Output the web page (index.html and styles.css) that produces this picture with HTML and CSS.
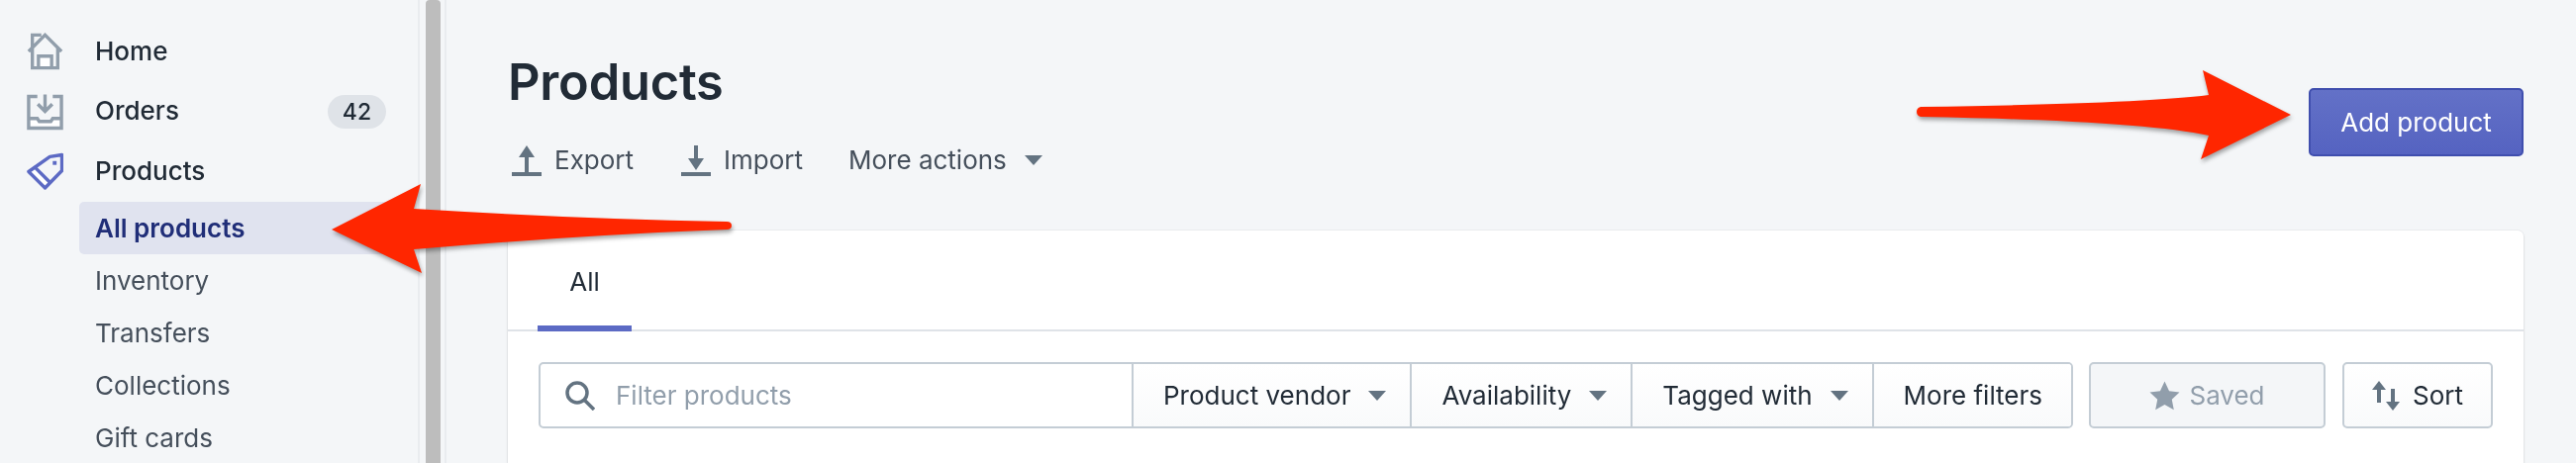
FILE: index.html
```html
<!DOCTYPE html>
<html lang="en">
<head>
<meta charset="utf-8">
<title>Products</title>
<link rel="stylesheet" href="styles.css">
</head>
<body>
<div class="app">
  <nav class="sidebar">
    <a class="nav-row">
      <svg class="nav-icon" viewBox="0 0 38 40"><path class="door" d="M12 37V25h14v12z"/><path class="ln" d="M1.500 20 19 2.500 36.500 20M5.500 16V2.500h9.500M5.500 15v22.500h27V15M12 37V25h14v12"/></svg>
      <span class="nav-label">Home</span>
    </a>
    <a class="nav-row">
      <svg class="nav-icon" viewBox="0 0 38 38"><path class="door" d="M2 26h9l2 3h12l2-3h9v10H2z"/><path class="ln" d="M11 3H2v33h34V3h-9M2 26h9l2 3h12l2-3h9M19 1v17M11.500 11l7.500 7.500 7.500-7.500"/></svg>
      <span class="nav-label">Orders</span>
      <span class="badge">42</span>
    </a>
    <a class="nav-row">
      <svg class="nav-icon tag" viewBox="0 0 38 38"><path class="door" d="m7 14-5 5 17 17 5-5z"/><path class="ln-tag" d="M36.500 2 24 4 2 19.500 19 36.500 36.500 18.500z"/><path class="ln-tag" d="m7.500 14 16.500 16.500"/><rect class="dot" x="27" y="8.500" width="4" height="4"/></svg>
      <span class="nav-label">Products</span>
    </a>
    <a class="sub-row active">All products</a>
    <a class="sub-row">Inventory</a>
    <a class="sub-row">Transfers</a>
    <a class="sub-row">Collections</a>
    <a class="sub-row">Gift cards</a>
  </nav>
  <div class="scrollbar"><div class="scroll-thumb"></div></div>
  <main class="main">
    <header class="page-head">
      <div>
        <h1>Products</h1>
        <div class="actions">
          <a class="action">
            <svg class="act-icon" viewBox="0 0 30 31"><path d="M15 0l8 12h-6v15h-4V12H7zM0 27h30v4H0z"/></svg>
            <span class="act-label">Export</span>
          </a>
          <a class="action tight">
            <svg class="act-icon" viewBox="0 0 30 31"><path d="M15 25 7 13h6V0h4v13h6zM0 27h30v4H0z"/></svg>
            <span class="act-label">Import</span>
          </a>
          <a class="action more"><span class="act-label">More actions</span><i class="caret"></i></a>
        </div>
      </div>
      <button class="primary">Add product</button>
    </header>
    <section class="card">
      <div class="tabs"><div class="tab">All</div></div>
      <div class="filters">
        <div class="seg-group">
          <label class="search">
            <svg class="search-icon" viewBox="0 0 30 30"><circle cx="12" cy="12" r="10" /><path d="M19 19l10 10"/></svg>
            <span>Filter products</span>
          </label>
          <button class="seg">Product vendor<i class="caret"></i></button>
          <button class="seg">Availability<i class="caret"></i></button>
          <button class="seg">Tagged with<i class="caret"></i></button>
          <button class="seg last">More filters</button>
        </div>
        <button class="btn saved">
          <svg class="star" viewBox="0 0 32 32"><path d="M16 1l4.700 10 10.800 1.400-8 7.400 2.100 10.900L16 25.300 6.400 30.700l2.100-10.900-8-7.400L11.300 11z"/></svg>
          Saved
        </button>
        <button class="btn sort">
          <svg class="sort-icon" viewBox="0 0 32 32"><path d="M9 1 2 10h5v13h4V10h5zM23 31l-7-9h5V9h4v13h5z"/></svg>
          Sort
        </button>
      </div>
    </section>
  </main>
</div>
<svg class="annotations" viewBox="0 0 2602 468">
  <path d="M335 232 425 186 418 211Q580 221 734 224Q739 224 739 228Q739 232 734 232Q580 238 418 252L426 276z"/>
  <path d="M2314 116 2225 71 2231 96Q2160 105 1940 108Q1936 109 1936 113Q1936 117 1940 118Q2160 122 2231 137L2223 161z"/>
</svg>
</body>
</html>
```
FILE: styles.css
```css
* { box-sizing: border-box; }
html, body { margin: 0; height: 468px; overflow: hidden; background: #f4f6f8; }
body { font-family: Inter, "Liberation Sans", sans-serif; font-size: 26px; color: #212b36; position: relative; }
.app { display: flex; height: 468px; overflow: hidden; filter: blur(.6px); }

.sidebar { width: 424px; height: 468px; overflow: hidden; flex: none; padding-top: 22px; border-right: 2px solid #e9ecef; }
.nav-row { display: flex; align-items: center; height: 60.500px; padding-left: 27px; font-weight: 500; color: #212b36; }
.nav-label { padding-bottom: 2px; }
.nav-icon { width: 37px; height: 38px; margin-right: 32px; flex: none; }
.ln { fill: none; stroke: #919eab; stroke-width: 3.500; }
.ln-tag { fill: none; stroke: #5c6ac4; stroke-width: 3.500; stroke-linejoin: round; }
.door { fill: #fff; }
.dot { fill: #5c6ac4; }
.badge { margin-left: auto; margin-right: 32px; width: 59px; height: 34px; border-radius: 17px; background: #dfe3e8; font-size: 23px; line-height: 34px; text-align: center; color: #212b36; }
.sub-row { display: block; height: 53px; line-height: 54px; margin-left: 80px; padding-left: 16px; color: #454f5b; margin-right: 23px; border-radius: 5px; font-weight: 400; }
.sub-row.active { background: #e0e3ef; color: #202e78; font-weight: 600; line-height: 53px; }

.scrollbar { width: 27px; flex: none; padding-left: 6px; border-right: 2px solid #e9ecef; }
.scroll-thumb { width: 15px; height: 100%; background: #bdbdbd; border-radius: 4px 4px 0 0; }

.main { flex: 1; min-width: 0; height: 468px; overflow: hidden; padding: 55px 53px 0 62px; }
.page-head { display: flex; justify-content: space-between; align-items: flex-start; margin-bottom: 54px; }
h1 { margin: 0; font-size: 50.500px; line-height: 56px; font-weight: 600; color: #212b36; letter-spacing: -.2px; }
.actions { display: flex; align-items: center; height: 34px; margin-top: 34px; padding-left: 4px; color: #454f5b; }
.action { display: flex; align-items: center; margin-right: 48px; }
.action.tight { margin-right: 46px; }
.act-label { padding-bottom: 2px; }
.act-icon { width: 30px; height: 31px; margin-right: 13px; fill: #637381; }
.caret { display: inline-block; width: 0; height: 0; margin-left: 18px; border-left: 9.500px solid transparent; border-right: 9.500px solid transparent; border-top: 10px solid #637381; }

button { font: inherit; cursor: default; }
.primary { width: 217px; height: 69px; margin-top: 34px; border: 2px solid #3f4eae; border-radius: 5px; background: linear-gradient(#6371c7, #5563c1); color: #fff; }

.card { background: #fff; border-radius: 6px 6px 0 0; height: 235px; box-shadow: 0 0 0 1px rgba(63,63,68,.05), 0 2px 3px rgba(63,63,68,.1); }
.tabs { height: 102px; border-bottom: 2px solid #dfe3e8; padding-left: 30px; }
.tab { width: 95px; height: 102px; line-height: 104px; text-align: center; border-bottom: 6px solid #5c6ac4; color: #212b36; }
.filters { display: flex; padding: 31px 31px 0; }
.seg-group { flex: 1; display: flex; height: 67px; border: 2px solid #c4cdd5; border-radius: 5px; overflow: hidden; margin-right: 16px; color: #212b36; }
.search { flex: 1; display: flex; align-items: center; padding-left: 25px; color: #919eab; }
.search-icon { width: 30px; height: 30px; margin-right: 21px; fill: none; stroke: #637381; stroke-width: 3.500; }
.seg { display: flex; align-items: center; height: 100%; padding: 0 24px 0 30px; border: 0; border-left: 2px solid #c4cdd5; background: linear-gradient(#fff, #f9fafb); color: #212b36; }
.seg.last { padding: 0 29px 0 30px; }
.btn { display: flex; align-items: center; justify-content: center; height: 67px; border: 2px solid #c4cdd5; border-radius: 5px; background: linear-gradient(#fff, #f9fafb); color: #212b36; }
.saved { width: 239px; margin-right: 17px; background: #f4f6f8; border-color: #c4cdd5; color: #919eab; }
.sort { width: 152px; padding-right: 8px; }
.star { width: 31px; height: 32px; margin-right: 9px; fill: #919eab; }
.sort-icon { width: 32px; height: 32px; margin-right: 11px; fill: #637381; }

.annotations { position: absolute; left: 0; top: 0; width: 2602px; height: 468px; pointer-events: none; fill: #ff2600; filter: drop-shadow(1px 3px 2px rgba(0,0,0,.35)); }
```
